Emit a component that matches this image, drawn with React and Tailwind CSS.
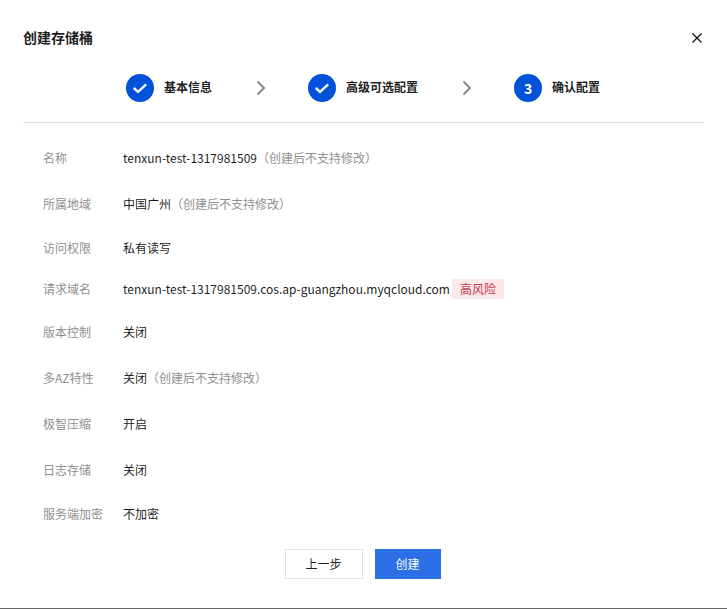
import React from "react";

const Hint = () => <span className="text-[#8f8f8f]">（创建后不支持修改）</span>;

const rows = [
  { h: "h-[44px]", label: "名称", value: <>tenxun-test-1317981509<Hint /></> },
  { h: "h-[48px]", label: "所属地域", value: <>中国广州<Hint /></> },
  { h: "h-[40px]", label: "访问权限", value: "私有读写" },
  {
    h: "h-[42px]",
    label: "请求域名",
    value: (
      <span className="flex items-center">
        tenxun-test-1317981509.cos.ap-guangzhou.myqcloud.com
        <span className="ml-[2px] flex h-[20px] w-[52px] items-center justify-center rounded-[1px] bg-[#fbe9ea] text-[#c5374a]">高风险</span>
      </span>
    ),
  },
  { h: "h-[44px]", label: "版本控制", value: "关闭" },
  { h: "h-[48px]", label: "多AZ特性", value: <>关闭<Hint /></> },
  { h: "h-[44px]", label: "极智压缩", value: "开启" },
  { h: "h-[48px]", label: "日志存储", value: "关闭" },
  { h: "h-[40px]", label: "服务端加密", value: "不加密" },
];

const Check = () => (
  <span className="flex h-[28px] w-[28px] items-center justify-center rounded-full bg-[#0052d9]">
    <svg width="16" height="16" viewBox="0 0 16 16" fill="none">
      <path d="M1.8 8 L6 11.8 L14.2 4.4" stroke="white" strokeWidth="2.4" />
    </svg>
  </span>
);

const Chevron = ({ className }) => (
  <svg className={className} width="10" height="16" viewBox="0 0 10 16" fill="none">
    <path d="M1.5 1.5 L8 8 L1.5 14.5" stroke="#8a8a8a" strokeWidth="2" />
  </svg>
);

const StepText = ({ children }) => (
  <span className="mb-[2px] ml-[10px] text-[12px] font-bold leading-[26px] text-[#000000e6]">{children}</span>
);

export default function App() {
  return (
    <div className="flex h-[609px] w-[727px] flex-col overflow-hidden border-b border-[#666666] bg-white font-['Noto_Sans_CJK_SC','Noto_Sans',sans-serif] text-[12px] text-[#000000e6]">
      <div className="flex h-[74px] items-start justify-between pl-[23px] pr-[24px] pt-[27px]">
        <h1 className="text-[14px] font-bold leading-[20px]">创建存储桶</h1>
        <svg className="mt-[5px]" width="12" height="12" viewBox="0 0 12 12" fill="none">
          <path d="M1.5 1.5 L10.5 10.5 M10.5 1.5 L1.5 10.5" stroke="#111111" strokeWidth="1.3" />
        </svg>
      </div>

      <div className="mx-[23px] flex h-[49px] items-start border-b border-[#dfdfdf] pl-[103px]">
        <div className="flex items-center">
          <Check />
          <StepText>基本信息</StepText>
          <Chevron className="ml-[44px]" />
        </div>
        <div className="ml-[42px] flex items-center">
          <Check />
          <StepText>高级可选配置</StepText>
          <Chevron className="ml-[44px]" />
        </div>
        <div className="ml-[42px] flex items-center">
          <span className="flex h-[28px] w-[28px] items-center justify-center rounded-full bg-[#0052d9] text-[14px] font-bold text-white">3</span>
          <StepText>确认配置</StepText>
        </div>
      </div>

      <div className="mt-[13px] flex flex-col pl-[43px]">
        {rows.map((r) => (
          <div key={r.label} className={`flex items-center ${r.h}`}>
            <span className="w-[80px] shrink-0 text-[#8f8f8f]">{r.label}</span>
            <span className="flex items-center">{r.value}</span>
          </div>
        ))}
      </div>

      <div className="mt-[15px] flex justify-center gap-[12px] pr-[2px]">
        <button className="h-[30px] w-[78px] border border-[#dfe1e8] bg-white text-[12px] text-[#000000e6]">上一步</button>
        <button className="h-[30px] w-[66px] bg-[#2b6fe8] text-[12px] text-white">创建</button>
      </div>
    </div>
  );
}
